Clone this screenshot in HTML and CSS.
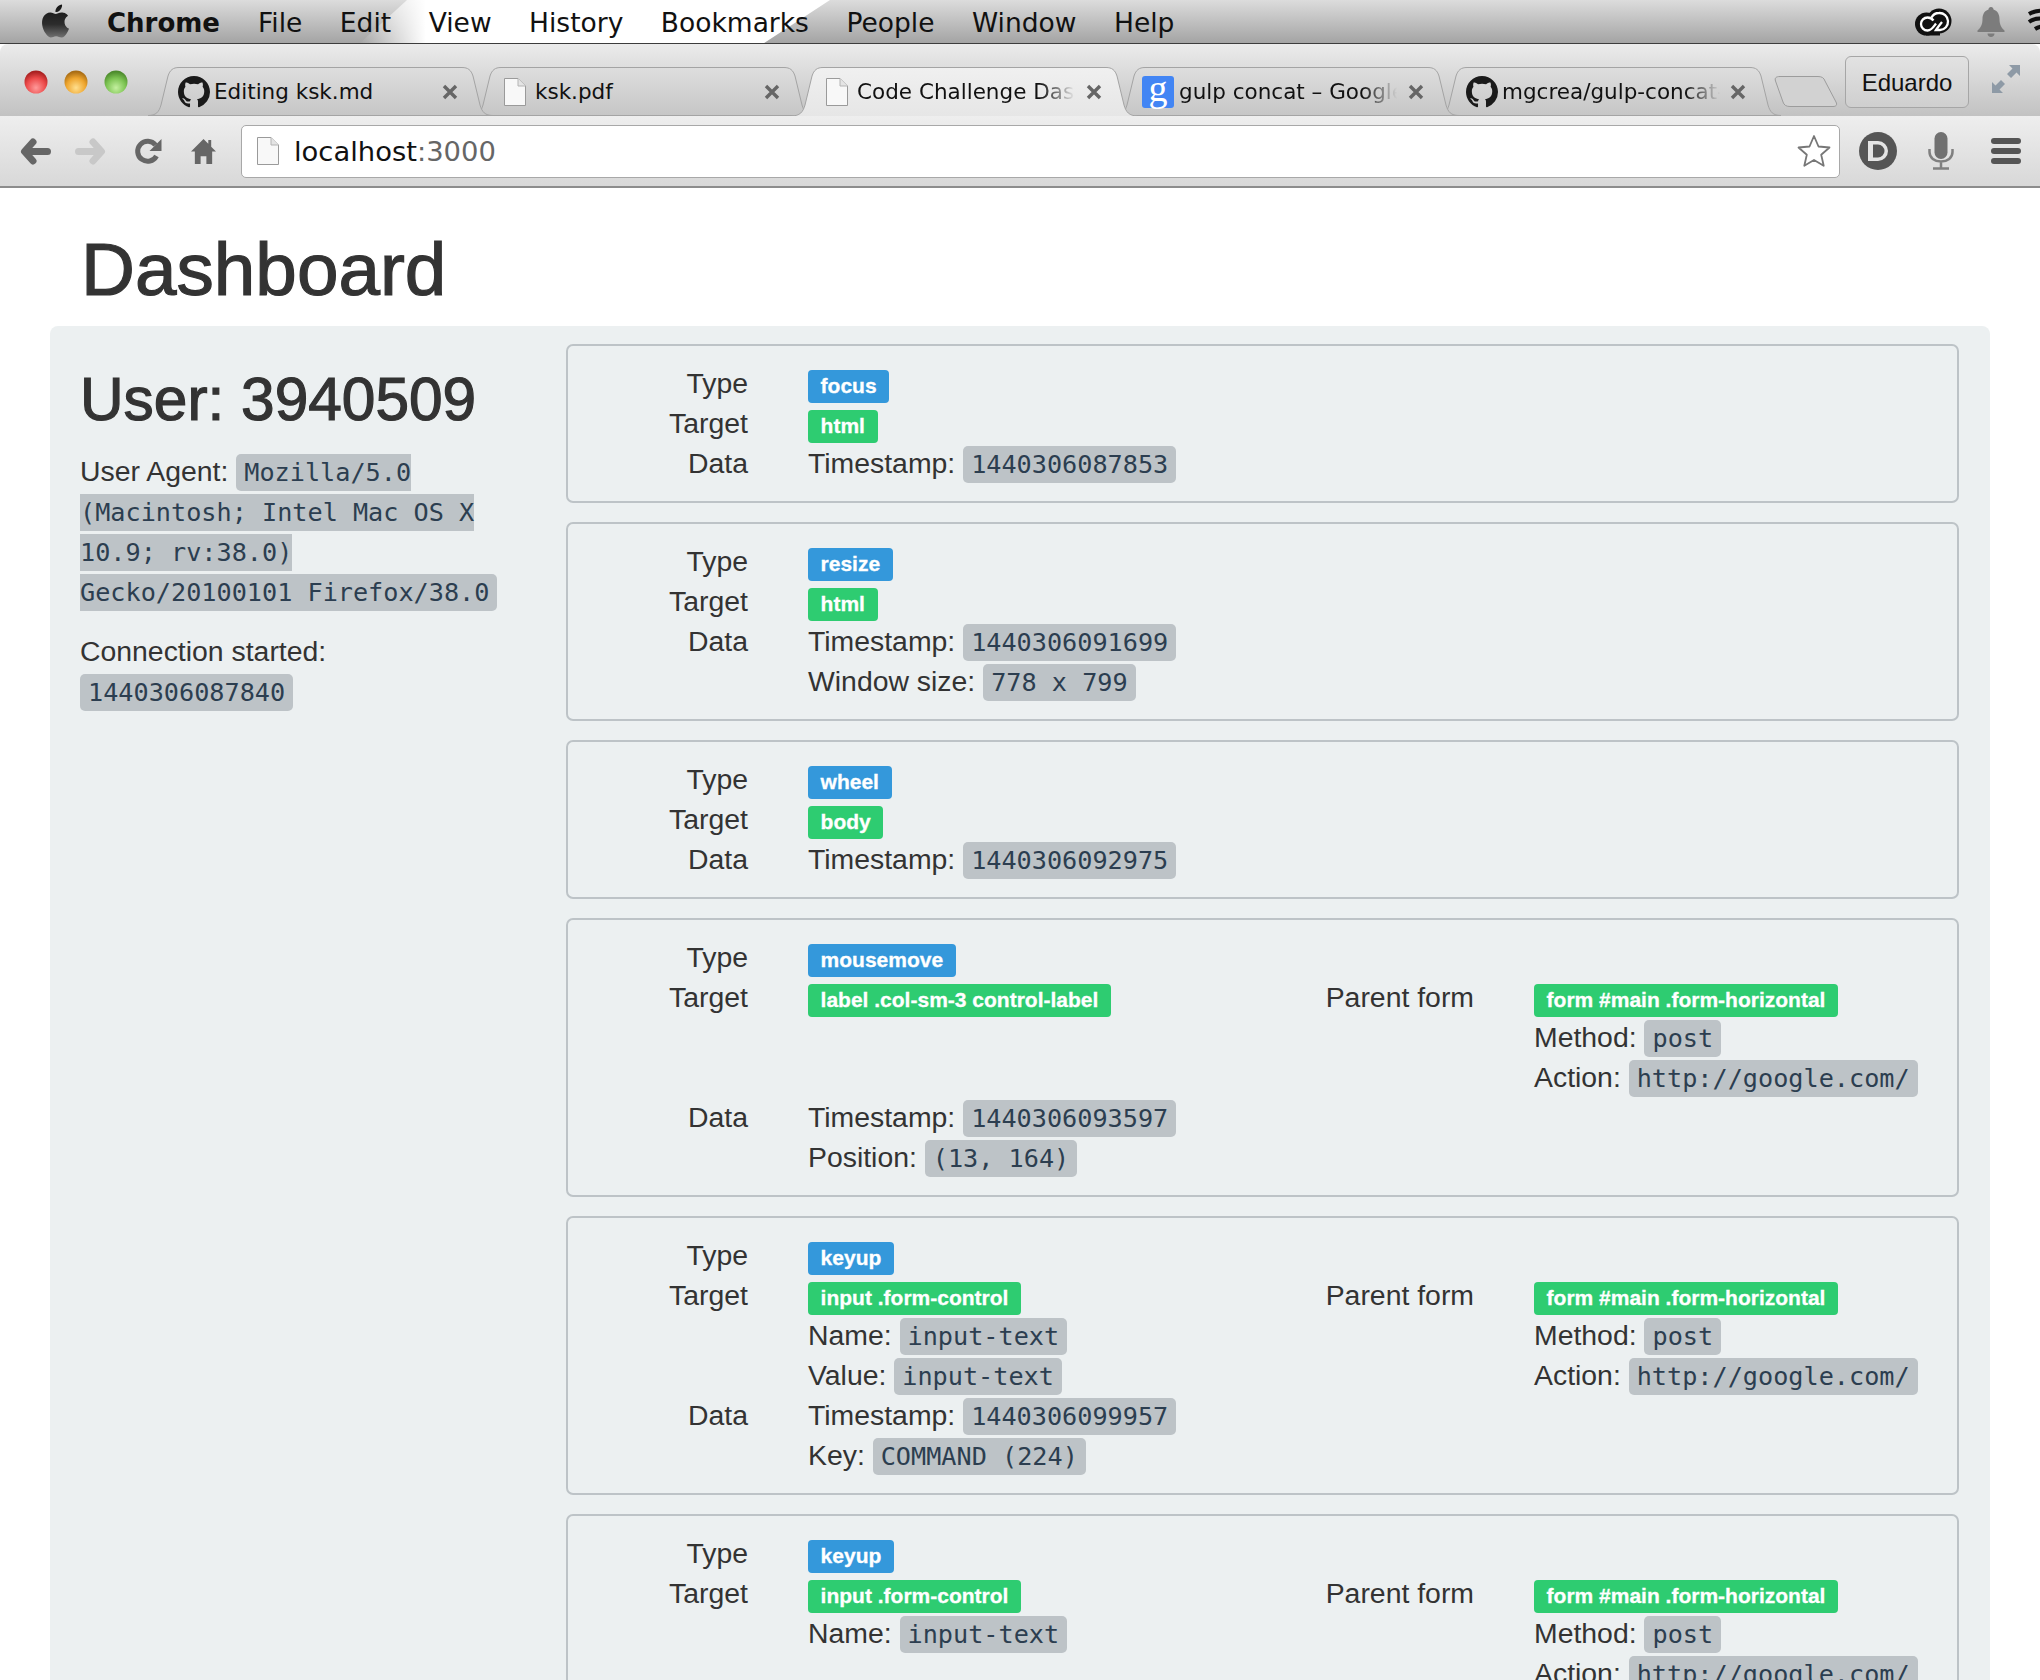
FILE: index.html
```html
<!DOCTYPE html>
<html lang="en">
<head>
  <meta charset="UTF-8">
  <title>Code Challenge Dashboard</title>
  <link rel="stylesheet" href="styles.css">
</head>
<body>

<!-- shared icons -->
<svg class="sprite" width="0" height="0">
  <defs>
    <linearGradient id="tabFill" x1="0" y1="0" x2="0" y2="1">
      <stop offset="0" stop-color="#dedede"/>
      <stop offset="1" stop-color="#c6c6c6"/>
    </linearGradient>
    <linearGradient id="tabActiveFill" x1="0" y1="0" x2="0" y2="1">
      <stop offset="0" stop-color="#f0f0f0"/>
      <stop offset="1" stop-color="#e6e6e6"/>
    </linearGradient>
    <linearGradient id="appleFill" x1="0" y1="0" x2="0" y2="1">
      <stop offset="0" stop-color="#161616"/>
      <stop offset="0.6" stop-color="#2c2c2c"/>
      <stop offset="1" stop-color="#707070"/>
    </linearGradient>
    <radialGradient id="redLight" cx="0.5" cy="0.75" r="0.7">
      <stop offset="0" stop-color="#ff9a9a"/>
      <stop offset="0.6" stop-color="#ec4a4a"/>
      <stop offset="1" stop-color="#a82020"/>
    </radialGradient>
    <radialGradient id="orangeLight" cx="0.5" cy="0.75" r="0.7">
      <stop offset="0" stop-color="#ffdf8e"/>
      <stop offset="0.6" stop-color="#eea52e"/>
      <stop offset="1" stop-color="#a86c14"/>
    </radialGradient>
    <radialGradient id="greenLight" cx="0.5" cy="0.75" r="0.7">
      <stop offset="0" stop-color="#c4f0a0"/>
      <stop offset="0.6" stop-color="#7cc352"/>
      <stop offset="1" stop-color="#4c8a2c"/>
    </radialGradient>
    <symbol id="i-tab" viewBox="0 0 347 49" preserveAspectRatio="none">
      <path d="M1 48.5C9 48.5 12 45 14 38L21 9C23 3 26 .5 32 .5H315C321 .5 324 3 326 9L333 38C335 45 338 48.5 346 48.5Z"/>
    </symbol>
    <symbol id="i-tab-active" viewBox="0 0 347 49" preserveAspectRatio="none">
      <path d="M0 49C9 49 12 45 14 38L21 9C23 3 26 .5 32 .5H315C321 .5 324 3 326 9L333 38C335 45 338 49 347 49"/>
    </symbol>
    <symbol id="i-github" viewBox="0 0 16 16">
      <path d="M8 0C3.58 0 0 3.58 0 8c0 3.54 2.29 6.53 5.47 7.59.4.07.55-.17.55-.38 0-.19-.01-.82-.01-1.49-2.01.37-2.53-.49-2.69-.94-.09-.23-.48-.94-.82-1.13-.28-.15-.68-.52-.01-.53.63-.01 1.08.58 1.23.82.72 1.21 1.87.87 2.33.66.07-.52.28-.87.51-1.07-1.78-.2-3.64-.89-3.64-3.95 0-.87.31-1.59.82-2.15-.08-.2-.36-1.02.08-2.12 0 0 .67-.21 2.2.82.64-.18 1.32-.27 2-.27.68 0 1.36.09 2 .27 1.53-1.04 2.2-.82 2.2-.82.44 1.1.16 1.92.08 2.12.51.56.82 1.27.82 2.15 0 3.07-1.87 3.75-3.65 3.95.29.25.54.73.54 1.48 0 1.07-.01 1.93-.01 2.2 0 .21.15.46.55.38A8.013 8.013 0 0016 8c0-4.42-3.58-8-8-8z"/>
    </symbol>
    <symbol id="i-doc" viewBox="0 0 22 28">
      <path d="M.5.5H14L21.5 8V27.5H.5Z" fill="#f8f8f8" stroke="#9a9a9a"/>
      <path d="M14 .5V8H21.5" fill="#e4e4e4" stroke="#b4b4b4"/>
    </symbol>
    <symbol id="i-close" viewBox="0 0 16 16">
      <path d="M2 2L14 14M14 2L2 14" fill="none" stroke="#666" stroke-width="3.4"/>
    </symbol>
  </defs>
</svg>

<div class="menubar">
  <div class="menu-glare"></div>
  <svg class="apple" viewBox="0 0 24 24"><path fill="url(#appleFill)" d="M12.152 6.896c-.948 0-2.415-1.078-3.96-1.04-2.04.027-3.91 1.183-4.961 3.014-2.117 3.675-.546 9.103 1.519 12.09 1.013 1.454 2.208 3.09 3.792 3.039 1.52-.065 2.09-.987 3.935-.987 1.831 0 2.35.987 3.96.948 1.637-.026 2.676-1.48 3.676-2.948 1.156-1.688 1.636-3.325 1.662-3.415-.039-.013-3.182-1.221-3.22-4.857-.026-3.04 2.48-4.494 2.597-4.559-1.429-2.09-3.623-2.324-4.39-2.376-2-.156-3.675 1.09-4.61 1.09zM15.53 3.83c.843-1.012 1.4-2.427 1.245-3.83-1.207.052-2.662.805-3.532 1.818-.78.896-1.454 2.338-1.273 3.714 1.338.104 2.715-.688 3.559-1.701"/></svg>
  <span class="menu-app">Chrome</span>
  <span class="menu-item">File</span>
  <span class="menu-item">Edit</span>
  <span class="menu-item">View</span>
  <span class="menu-item">History</span>
  <span class="menu-item">Bookmarks</span>
  <span class="menu-item">People</span>
  <span class="menu-item">Window</span>
  <span class="menu-item">Help</span>
  <div class="menu-status">
    <svg class="status-cc" viewBox="0 0 38 28">
      <circle cx="12.500" cy="16" r="11.500" fill="#111"/>
      <circle cx="25" cy="13" r="12.500" fill="#111"/>
      <rect x="12" y="14" width="14" height="13.500" fill="#111"/>
      <path d="M19.500 12.500C18 10.500 15.500 9.500 13.500 9.500A6.500 6.500 0 0 0 13.500 22.500C18 22.500 20 18 22 15.500" fill="none" stroke="#fff" stroke-width="2.300"/>
      <path d="M17.500 9.500C19 6.500 22 5 25 5A8 8 0 0 1 26 22H22C24 19 26 16.500 28 14" fill="none" stroke="#fff" stroke-width="2.300"/>
    </svg>
    <svg class="status-bell" viewBox="0 0 28 30">
      <path fill="#7c7c7c" d="M14 0c1.500 0 2.500 1 2.500 2.500C21 4 22.500 8 22.500 12c0 6 2 9 5 11.500v1.500H.5v-1.500c3-2.500 5-5.500 5-11.500 0-4 1.500-8 6-9.500C11.500 1 12.500 0 14 0zM10.500 26.500h7c0 2-1.500 3.500-3.500 3.500s-3.500-1.500-3.500-3.500z"/>
    </svg>
    <svg class="status-wifi" viewBox="0 0 15 28">
      <path d="M3 6C8 3 14 2 22 3M3 14c4-3 10-4 16-3M9 21c3-2 6-3 10-2" fill="none" stroke="#111" stroke-width="4"/>
    </svg>
  </div>
</div>

<div class="tabstrip">
  <div class="lights">
    <svg class="light" viewBox="0 0 24 24"><circle cx="12" cy="12" r="11.500" fill="url(#redLight)"/></svg>
    <svg class="light" viewBox="0 0 24 24"><circle cx="12" cy="12" r="11.500" fill="url(#orangeLight)"/></svg>
    <svg class="light" viewBox="0 0 24 24"><circle cx="12" cy="12" r="11.500" fill="url(#greenLight)"/></svg>
  </div>
  <div class="tabs">
    <div class="tab">
      <svg class="tab-shape"><use href="#i-tab"/></svg>
      <svg class="fav fav-round"><use href="#i-github"/></svg>
      <span class="tab-title">Editing ksk.md</span>
      <svg class="tab-close"><use href="#i-close"/></svg>
    </div>
    <div class="tab">
      <svg class="tab-shape"><use href="#i-tab"/></svg>
      <svg class="fav fav-doc"><use href="#i-doc"/></svg>
      <span class="tab-title">ksk.pdf</span>
      <svg class="tab-close"><use href="#i-close"/></svg>
    </div>
    <div class="tab tab-active">
      <svg class="tab-shape"><use href="#i-tab-active"/></svg>
      <svg class="fav fav-doc"><use href="#i-doc"/></svg>
      <span class="tab-title tab-fade">Code Challenge Dashboard</span>
      <svg class="tab-close"><use href="#i-close"/></svg>
    </div>
    <div class="tab">
      <svg class="tab-shape"><use href="#i-tab"/></svg>
      <span class="fav fav-google">g</span>
      <span class="tab-title tab-fade">gulp concat – Google Search</span>
      <svg class="tab-close"><use href="#i-close"/></svg>
    </div>
    <div class="tab">
      <svg class="tab-shape"><use href="#i-tab"/></svg>
      <svg class="fav fav-round"><use href="#i-github"/></svg>
      <span class="tab-title tab-fade">mgcrea/gulp-concat-angular</span>
      <svg class="tab-close"><use href="#i-close"/></svg>
    </div>
  </div>
  <svg class="newtab" viewBox="0 0 64 31"><path d="M6 .5H44C48 .5 50 2 51 5L62 26C63.500 29 62 30.500 59 30.500H16C12 30.500 10 29 9 26L1.500 5C.5 2 2 .5 6 .5Z" fill="#d2d2d2" stroke="#9c9c9c"/></svg>
  <div class="profile">Eduardo</div>
  <svg class="expand" viewBox="0 0 28 28">
    <path fill="#8e9aa6" d="M17 0H28V11L24.500 7.500 19 13 15 9 20.500 3.500ZM0 17 3.500 20.500 9 15 13 19 7.500 24.500 11 28H0Z"/>
  </svg>
</div>

<div class="toolbar">
  <svg class="tool tool-arrow" viewBox="0 0 31 27"><path d="M9 13.500H27.500M13 4L4.500 13.500 13 23" fill="none" stroke="#666" stroke-width="7" stroke-linecap="round" stroke-linejoin="round"/></svg>
  <svg class="tool tool-arrow tool-forward" viewBox="0 0 31 27"><path d="M22 13.500H3.500M18 4L26.500 13.500 18 23" fill="none" stroke="#c8c8c8" stroke-width="7" stroke-linecap="round" stroke-linejoin="round"/></svg>
  <svg class="tool tool-reload" viewBox="0 0 28 28"><path fill="none" stroke="#666" stroke-width="5" d="M22 19a10 10 0 1 1-1-11"/><path fill="#666" d="M27 2v12H15z"/></svg>
  <svg class="tool tool-home" viewBox="0 0 26 28"><path fill="#666" d="M13 1L0 14h4v13h6v-8h6v8h6V14h4l-5-5V2h-3v4z"/></svg>
  <div class="urlbar">
    <svg class="url-doc"><use href="#i-doc"/></svg>
    <span class="url-host">localhost</span><span class="url-port">:3000</span>
    <svg class="url-star" viewBox="0 0 34 34"><path fill="#fff" stroke="#777" stroke-width="1.800" stroke-linejoin="round" d="M17 2l4.500 10.500 11 1-8.300 7.300 2.500 11L17 26l-9.700 5.800 2.500-11L1.500 13.500l11-1z"/></svg>
  </div>
  <svg class="tool tool-pocket" viewBox="0 0 38 38"><circle cx="19" cy="19" r="19" fill="#555"/><path fill="#e4e4e4" fill-rule="evenodd" d="M9 9h10a10 10 0 0 1 0 20H9zM14 12.500v13h5a6.500 6.500 0 0 0 0-13z"/></svg>
  <svg class="tool tool-mic" viewBox="0 0 26 38"><rect x="6.500" y="0" width="13" height="27" rx="6.500" fill="#707070"/><path d="M1.500 17v3c0 6 5 9.500 11.500 9.500S24.500 26 24.500 20v-3M13 29.500v6M5 36.500h16" fill="none" stroke="#808080" stroke-width="2.500"/></svg>
  <svg class="tool tool-menu" viewBox="0 0 30 26"><rect width="30" height="6" rx="3" fill="#555"/><rect y="10" width="30" height="6" rx="3" fill="#555"/><rect y="20" width="30" height="6" rx="3" fill="#555"/></svg>
</div>

<div class="page">
  <h1>Dashboard</h1>

  <div class="panel">
    <div class="sidebar">
      <h2>User: 3940509</h2>
      <p>User Agent: <code>Mozilla/5.0 (Macintosh; Intel Mac OS X 10.9; rv:38.0) Gecko/20100101 Firefox/38.0</code></p>
      <p>Connection started: <code>1440306087840</code></p>
    </div>

    <div class="events">
      <div class="card">
        <div class="field"><div class="name">Type</div><div class="value"><span class="label label-type">focus</span></div></div>
        <div class="field"><div class="name">Target</div><div class="value"><span class="label label-target">html</span></div></div>
        <div class="field"><div class="name">Data</div><div class="value">Timestamp: <code>1440306087853</code></div></div>
      </div>

      <div class="card">
        <div class="field"><div class="name">Type</div><div class="value"><span class="label label-type">resize</span></div></div>
        <div class="field"><div class="name">Target</div><div class="value"><span class="label label-target">html</span></div></div>
        <div class="field">
          <div class="name">Data</div>
          <div class="value">
            <div>Timestamp: <code>1440306091699</code></div>
            <div>Window size: <code>778 x 799</code></div>
          </div>
        </div>
      </div>

      <div class="card">
        <div class="field"><div class="name">Type</div><div class="value"><span class="label label-type">wheel</span></div></div>
        <div class="field"><div class="name">Target</div><div class="value"><span class="label label-target">body</span></div></div>
        <div class="field"><div class="name">Data</div><div class="value">Timestamp: <code>1440306092975</code></div></div>
      </div>

      <div class="card">
        <div class="field"><div class="name">Type</div><div class="value"><span class="label label-type">mousemove</span></div></div>
        <div class="target-row">
          <div class="field target-main"><div class="name">Target</div><div class="value"><span class="label label-target">label .col-sm-3 control-label</span></div></div>
          <div class="field">
            <div class="name">Parent form</div>
            <div class="value">
              <div><span class="label label-target">form #main .form-horizontal</span></div>
              <div>Method: <code>post</code></div>
              <div>Action: <code>http://google.com/</code></div>
            </div>
          </div>
        </div>
        <div class="field">
          <div class="name">Data</div>
          <div class="value">
            <div>Timestamp: <code>1440306093597</code></div>
            <div>Position: <code>(13, 164)</code></div>
          </div>
        </div>
      </div>

      <div class="card">
        <div class="field"><div class="name">Type</div><div class="value"><span class="label label-type">keyup</span></div></div>
        <div class="target-row">
          <div class="field target-main">
            <div class="name">Target</div>
            <div class="value">
              <div><span class="label label-target">input .form-control</span></div>
              <div>Name: <code>input-text</code></div>
              <div>Value: <code>input-text</code></div>
            </div>
          </div>
          <div class="field">
            <div class="name">Parent form</div>
            <div class="value">
              <div><span class="label label-target">form #main .form-horizontal</span></div>
              <div>Method: <code>post</code></div>
              <div>Action: <code>http://google.com/</code></div>
            </div>
          </div>
        </div>
        <div class="field">
          <div class="name">Data</div>
          <div class="value">
            <div>Timestamp: <code>1440306099957</code></div>
            <div>Key: <code>COMMAND (224)</code></div>
          </div>
        </div>
      </div>

      <div class="card">
        <div class="field"><div class="name">Type</div><div class="value"><span class="label label-type">keyup</span></div></div>
        <div class="target-row">
          <div class="field target-main">
            <div class="name">Target</div>
            <div class="value">
              <div><span class="label label-target">input .form-control</span></div>
              <div>Name: <code>input-text</code></div>
            </div>
          </div>
          <div class="field">
            <div class="name">Parent form</div>
            <div class="value">
              <div><span class="label label-target">form #main .form-horizontal</span></div>
              <div>Method: <code>post</code></div>
              <div>Action: <code>http://google.com/</code></div>
            </div>
          </div>
        </div>
      </div>
    </div>
  </div>
</div>

</body>
</html>
```

FILE: styles.css
```css
* {
  box-sizing: border-box;
}

html, body {
  height: 1680px;
  margin: 0;
  overflow: hidden;
}

body {
  background: #fff;
  font-family: "Liberation Sans", Arial, sans-serif;
  font-size: 28.400px;
  line-height: 40px;
  color: #333;
}

.sprite {
  position: absolute;
}

/* mac menu bar */
.menubar {
  position: relative;
  display: flex;
  align-items: center;
  height: 44px;
  padding: 2px 0 0 40px;
  overflow: hidden;
  background: linear-gradient(#dcdcdc, #a4a4a4);
  border-bottom: 1px solid #3c3c3c;
  font-family: "DejaVu Sans", sans-serif;
  font-size: 26.500px;
  line-height: 40px;
  color: #111;
}

.menu-glare {
  position: absolute;
  top: 0;
  bottom: 0;
  left: 360px;
  width: 470px;
  background: linear-gradient(90deg, rgba(255,255,255,0), #fff 14%, #fff 100%);
  clip-path: polygon(10% 0, 100% 0, 86% 100%, 0 100%);
}

.apple {
  position: relative;
  width: 33px;
  height: 36px;
  margin: -3px 35px 0 -1px;
}

.menu-app {
  position: relative;
  font-size: 26px;
  font-weight: bold;
  margin-right: 38px;
}

.menu-item {
  position: relative;
  margin-right: 37.500px;
}

.menu-status {
  position: relative;
  display: flex;
  align-items: center;
  gap: 25px;
  margin: -2px -1px 0 auto;
}

.status-cc {
  width: 38px;
  height: 28px;
}

.status-bell {
  width: 28px;
  height: 30px;
}

.status-wifi {
  width: 15px;
  height: 28px;
  margin-left: -4px;
}

/* tabs */
.tabstrip {
  display: flex;
  align-items: flex-end;
  height: 72px;
  background: linear-gradient(#ebebeb, #c2c2c2);
  border-radius: 8px 8px 0 0;
}

.lights {
  display: flex;
  align-self: flex-start;
  gap: 16px;
  width: 147px;
  padding: 26px 0 0 24px;
}

.light {
  width: 24px;
  height: 24px;
}

.tabs {
  display: flex;
}

.tab {
  position: relative;
  display: flex;
  align-items: center;
  width: 347px;
  height: 49px;
  padding-left: 31px;
  font-family: "DejaVu Sans", sans-serif;
  font-size: 21.500px;
  color: #111;
}

.tab + .tab {
  margin-left: -25px;
}

.tab:nth-child(1) { z-index: 4; }
.tab:nth-child(2) { z-index: 3; }
.tab:nth-child(3) { z-index: 5; }
.tab:nth-child(4) { z-index: 2; }
.tab:nth-child(5) { z-index: 1; }

.tab-shape {
  position: absolute;
  top: 0;
  left: 0;
  width: 347px;
  height: 49px;
  fill: url(#tabFill);
  stroke: #a4a4a4;
  stroke-width: 1;
}

.tab-active .tab-shape {
  fill: url(#tabActiveFill);
}

.fav {
  position: relative;
  flex: none;
  margin-right: 4px;
}

.fav-round {
  width: 32px;
  height: 32px;
  fill: #1a1a1a;
}

.fav-doc {
  width: 22px;
  height: 28px;
  margin: 0 9px 0 4px;
}

.fav-google {
  width: 32px;
  height: 32px;
  margin: 0 5px 0 -2px;
  background: #4285f4;
  border-radius: 3px;
  font-family: "Liberation Serif", serif;
  font-size: 38px;
  line-height: 24px;
  text-align: center;
  color: #fff;
}

.tab-title {
  position: relative;
  white-space: nowrap;
  overflow: hidden;
  width: 218px;
}

.tab-fade {
  mask-image: linear-gradient(90deg, #000 84%, transparent 100%);
  -webkit-mask-image: linear-gradient(90deg, #000 84%, transparent 100%);
}

.tab-close {
  position: absolute;
  left: 295px;
  top: 17px;
  width: 16px;
  height: 16px;
}

.newtab {
  width: 64px;
  height: 31px;
  margin: 0 7px 9px -8px;
}

.profile {
  width: 124px;
  height: 52px;
  margin-bottom: 8px;
  background: linear-gradient(#e2e2e2, #cfcfcf);
  border: 1px solid #a6a6a6;
  border-radius: 6px;
  font-size: 24px;
  line-height: 52px;
  text-align: center;
  color: #111;
}

.expand {
  width: 28px;
  height: 28px;
  margin: 0 0 23px 23px;
}

/* address bar row */
.toolbar {
  display: flex;
  align-items: center;
  height: 72px;
  padding-left: 20px;
  background: linear-gradient(#eeeeee, #d8d8d8);
  border-bottom: 2px solid #8c8c8c;
}

.tool {
  flex: none;
}

.tool-arrow {
  width: 31px;
  height: 27px;
  margin-right: 24px;
}

.tool-forward {
  margin-right: 28px;
}

.tool-reload {
  width: 29px;
  height: 28px;
  margin-right: 28px;
}

.tool-home {
  width: 25px;
  height: 27px;
  margin-right: 25px;
}

.urlbar {
  display: flex;
  align-items: center;
  width: 1599px;
  height: 53px;
  padding-left: 15px;
  background: #fff;
  border: 1px solid #a8a8a8;
  border-radius: 5px;
  font-family: "DejaVu Sans", sans-serif;
  font-size: 27.400px;
  color: #111;
}

.url-doc {
  width: 22px;
  height: 28px;
  margin-right: 15px;
}

.url-host,
.url-port {
  padding-top: 2px;
}

.url-port {
  color: #666;
}

.url-star {
  width: 34px;
  height: 34px;
  margin-left: auto;
  margin-right: 8px;
}

.tool-pocket {
  width: 38px;
  height: 38px;
  margin-left: 19px;
}

.tool-mic {
  width: 26px;
  height: 38px;
  margin-left: 31px;
}

.tool-menu {
  width: 30px;
  height: 26px;
  margin-left: 37px;
}

/* dashboard */
h1 {
  margin: 0;
  padding: 41px 0 16px 81px;
  font-size: 74.700px;
  line-height: 81px;
  font-weight: normal;
  -webkit-text-stroke: 1.200px #333;
}

.panel {
  display: flex;
  width: 1940px;
  height: 1400px;
  margin-left: 50px;
  padding: 18px 31px 18px 30px;
  background: #ecf0f1;
  border-radius: 8px;
}

.sidebar {
  width: 425px;
  margin-right: 61px;
  padding-top: 22px;
}

h2 {
  margin: 0 0 19px;
  font-size: 60.400px;
  line-height: 66px;
  font-weight: normal;
  -webkit-text-stroke: 1.200px #333;
}

p {
  margin: 0 0 20px;
}

code {
  padding: 4px 8px;
  background: #bdc3c7;
  border-radius: 5px;
  font-family: "DejaVu Sans Mono", monospace;
  font-size: 25.200px;
  line-height: 1;
  color: #2c3e50;
}

.events {
  display: flex;
  flex-direction: column;
  gap: 19px;
  width: 1393px;
}

.card {
  padding: 17px 0 18px;
  border: 2px solid #bdc3c7;
  border-radius: 7px;
}

.field {
  display: flex;
}

.name {
  flex: none;
  width: 180px;
  margin-right: 60px;
  text-align: right;
}

.target-row {
  display: flex;
}

.target-main {
  width: 726px;
}

.label {
  padding: 4.200px 12.600px 6.300px;
  border-radius: 4px;
  font-size: 21px;
  line-height: 1;
  font-weight: bold;
  color: #fff;
  white-space: nowrap;
  -webkit-text-stroke: 0.3px #fff;
}

.label-type {
  background: #3498db;
}

.label-target {
  background: #2ecc71;
}
```
